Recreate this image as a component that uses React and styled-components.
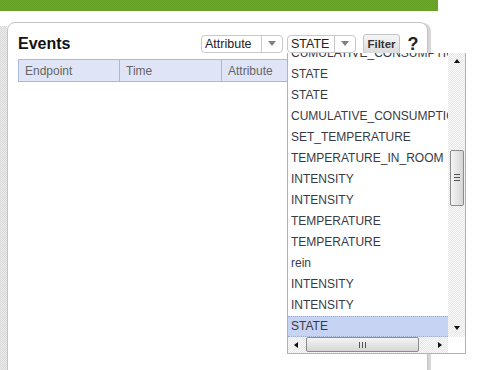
import React from "react";
import styled, { createGlobalStyle } from "styled-components";

const Global = createGlobalStyle`
  html, body { margin: 0; padding: 0; background: #fff; }
  body { font-family: "Liberation Sans", Arial, sans-serif; }
`;

const Page = styled.div`
  width: 503px;
  height: 370px;
  overflow: hidden;
`;

const TopBar = styled.div`
  width: 438px;
  height: 11px;
  background: repeating-conic-gradient(#6ca62a 0 25%, #64a024 0 50%) 0 0 / 2px 2px;
`;

const Body = styled.div`
  display: flex;
  align-items: flex-start;
`;

const SideStrip = styled.div`
  width: 7px;
  height: 360px;
  margin-top: 15px;
  background: repeating-conic-gradient(#ececec 0 25%, #d8d8d8 0 50%) 0 0 / 2px 2px;
`;

const Panel = styled.section`
  width: 421px;
  height: 400px;
  box-sizing: border-box;
  margin-top: 11px;
  border: 1px solid #c4c4c4;
  border-radius: 8px;
  box-shadow: 3px 1px 1px rgba(0, 0, 0, 0.16);
  padding: 10px 8px 0 10px;
  background: #fff;
`;

const HeaderRow = styled.div`
  display: flex;
  align-items: center;
  height: 21px;
`;

const Title = styled.h2`
  flex: 1;
  margin: 0;
  font-size: 16px;
  font-weight: bold;
  color: #111;
`;

const Controls = styled.div`
  display: flex;
  align-items: center;
`;

const SelectBox = styled.div`
  position: relative;
  display: flex;
  height: 18px;
  box-sizing: border-box;
  border: 1px solid #c8c8c8;
  border-radius: 4px;
  background: #fff;
  margin-right: ${(p) => p.$gap}px;
`;

const SelectText = styled.span`
  width: ${(p) => p.$w}px;
  box-sizing: border-box;
  padding-left: 3px;
  font-size: 12.5px;
  line-height: 16px;
  color: #222;
`;

const SelectArrow = styled.span`
  width: 20px;
  border-left: 1px solid #c8c8c8;
  display: flex;
  align-items: center;
  justify-content: center;
  &::after {
    content: "";
    border-left: 4px solid transparent;
    border-right: 4px solid transparent;
    border-top: 5px solid #808080;
  }
`;

const FilterButton = styled.button`
  width: 37px;
  height: 20px;
  box-sizing: border-box;
  padding: 0;
  margin-right: 7px;
  border: 1px solid #c4c4c4;
  border-radius: 3px;
  background: linear-gradient(#f6f6f6, #dcdcdc);
  font-family: "Liberation Sans", Arial, sans-serif;
  font-size: 11.5px;
  font-weight: bold;
  color: #333;
`;

const Help = styled.span`
  width: 12px;
  text-align: center;
  font-size: 18px;
  font-weight: bold;
  color: #222;
  line-height: 20px;
`;

const TableHead = styled.div`
  display: flex;
  height: 23px;
  box-sizing: border-box;
  margin-top: 5px;
  border: 1px solid #aab8e0;
  background: #dfe5f6;
`;

const HeadCell = styled.div`
  width: ${(p) => p.$w}px;
  box-sizing: border-box;
  padding-left: ${(p) => p.$pad}px;
  border-right: 1px solid #aab8e0;
  font-size: 12px;
  line-height: 22px;
  color: #666;
`;

const Dropdown = styled.div`
  position: absolute;
  left: -1px;
  top: calc(100% + 1px);
  z-index: 10;
  width: 179px;
  height: 301px;
  box-sizing: border-box;
  border: 1px solid #9fb4e2;
  border-top: none;
  background: #fff;
  display: grid;
  grid-template-columns: 160px 17px;
  grid-template-rows: 284px 16px;
`;

const ListArea = styled.div`
  overflow: hidden;
`;

const List = styled.ul`
  list-style: none;
  margin: -10px 0 0;
  padding: 0;
`;

const Item = styled.li`
  height: 21px;
  box-sizing: border-box;
  padding-left: 3px;
  font-size: 12px;
  line-height: 19px;
  white-space: nowrap;
  color: #3a3a44;
  background: ${(p) => (p.$sel ? "#c7d3f3" : "transparent")};
  border-top: 1px dotted ${(p) => (p.$sel ? "#9aaad8" : "transparent")};
  border-bottom: 1px dotted ${(p) => (p.$sel ? "#9aaad8" : "transparent")};
`;

const checker = `repeating-conic-gradient(#fbfbfb 0 25%, #e6e6ea 0 50%) 0 0 / 2px 2px`;

const VScroll = styled.div`
  display: flex;
  flex-direction: column;
  background: ${checker};
`;

const HScroll = styled.div`
  display: flex;
  align-items: center;
  background: ${checker};
`;

const Corner = styled.div`
  background: #fff;
`;

const ArrowBtn = styled.div`
  flex: 0 0 ${(p) => p.$size}px;
  width: ${(p) => (p.$horizontal ? p.$size + "px" : "auto")};
  height: ${(p) => (p.$horizontal ? "16px" : p.$size + "px")};
  display: flex;
  align-items: center;
  justify-content: center;
  &::after {
    content: "";
    ${(p) =>
      p.$dir === "up"
        ? "border-left:3px solid transparent;border-right:3px solid transparent;border-bottom:4px solid #111;"
        : p.$dir === "down"
        ? "border-left:3px solid transparent;border-right:3px solid transparent;border-top:4px solid #111;"
        : p.$dir === "left"
        ? "border-top:3px solid transparent;border-bottom:3px solid transparent;border-right:4px solid #111;"
        : "border-top:3px solid transparent;border-bottom:3px solid transparent;border-left:4px solid #111;"}
  }
`;

const VTrack = styled.div`
  flex: 1;
  display: flex;
  flex-direction: column;
  align-items: center;
`;

const HTrack = styled.div`
  flex: 1;
  display: flex;
  align-items: center;
  height: 16px;
`;

const Thumb = styled.div`
  box-sizing: border-box;
  border: 1px solid #8c8c8c;
  border-radius: 2px;
  background: linear-gradient(${(p) => (p.$horizontal ? "180deg" : "90deg")}, #f4f4f4, #d6d6d6);
  display: flex;
  align-items: center;
  justify-content: center;
`;

const Grip = styled.span`
  width: ${(p) => (p.$horizontal ? "7px" : "6px")};
  height: ${(p) => (p.$horizontal ? "6px" : "7px")};
  background: ${(p) =>
    p.$horizontal
      ? "repeating-linear-gradient(90deg, #555 0 1px, transparent 1px 3px)"
      : "repeating-linear-gradient(180deg, #555 0 1px, transparent 1px 3px)"};
`;

const items = [
  "CUMULATIVE_CONSUMPTION",
  "STATE",
  "STATE",
  "CUMULATIVE_CONSUMPTION",
  "SET_TEMPERATURE",
  "TEMPERATURE_IN_ROOM",
  "INTENSITY",
  "INTENSITY",
  "TEMPERATURE",
  "TEMPERATURE",
  "rein",
  "INTENSITY",
  "INTENSITY",
  "STATE",
];

export default function App() {
  return (
    <Page>
      <Global />
      <TopBar />
      <Body>
        <SideStrip />
        <Panel>
          <HeaderRow>
            <Title>Events</Title>
            <Controls>
              <SelectBox $gap={4}>
                <SelectText $w={59}>Attribute</SelectText>
                <SelectArrow />
              </SelectBox>
              <SelectBox $gap={7}>
                <SelectText $w={46}>STATE</SelectText>
                <SelectArrow />
                <Dropdown>
                  <ListArea>
                    <List>
                      {items.map((t, i) => (
                        <Item key={i} $sel={i === items.length - 1}>
                          {t}
                        </Item>
                      ))}
                    </List>
                  </ListArea>
                  <VScroll>
                    <ArrowBtn $dir="up" $size={17} />
                    <VTrack>
                      <Thumb style={{ width: 14, height: 56, marginTop: 80 }}>
                        <Grip />
                      </Thumb>
                    </VTrack>
                    <ArrowBtn $dir="down" $size={17} />
                  </VScroll>
                  <HScroll>
                    <ArrowBtn $dir="left" $size={16} $horizontal />
                    <HTrack>
                      <Thumb $horizontal style={{ width: 113, height: 15, marginLeft: 2 }}>
                        <Grip $horizontal />
                      </Thumb>
                    </HTrack>
                    <ArrowBtn $dir="right" $size={16} $horizontal />
                  </HScroll>
                  <Corner />
                </Dropdown>
              </SelectBox>
              <FilterButton>Filter</FilterButton>
              <Help>?</Help>
            </Controls>
          </HeaderRow>
          <TableHead>
            <HeadCell $w={101} $pad={6}>Endpoint</HeadCell>
            <HeadCell $w={102} $pad={6}>Time</HeadCell>
            <HeadCell $w={120} $pad={6}>Attribute</HeadCell>
          </TableHead>
        </Panel>
      </Body>
    </Page>
  );
}
